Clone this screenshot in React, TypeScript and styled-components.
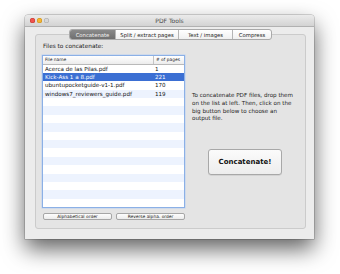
import React from "react";
import styled, { createGlobalStyle } from "styled-components";

const Global = createGlobalStyle`
  html, body { margin: 0; padding: 0; background: #ffffff; }
  body { font-family: "DejaVu Sans", "Liberation Sans", sans-serif; }
`;

const Page = styled.div`
  width: 340px;
  height: 274px;
  padding: 15px 0 0 25px;
  box-sizing: border-box;
  overflow: hidden;
`;

const Window = styled.div`
  width: 289px;
  height: 224px;
  background: #ececec;
  border-radius: 3px 3px 0 0;
  box-shadow: 0 10px 22px rgba(0, 0, 0, 0.62), 0 0 0 0.5px rgba(0, 0, 0, 0.3);
  display: flex;
  flex-direction: column;
  overflow: hidden;
`;

const TitleBar = styled.div`
  height: 12px;
  flex: none;
  background: linear-gradient(#ebebeb, #d3d3d3);
  border-bottom: 1px solid #b1b1b1;
  display: flex;
  align-items: center;
  position: relative;
  padding-left: 5px;
  box-sizing: border-box;
`;

const Lights = styled.div`
  display: flex;
  gap: 2px;
`;

const Light = styled.span<{ $c: string; $b: string }>`
  width: 5px;
  height: 5px;
  border-radius: 50%;
  background: ${(p) => p.$c};
  box-shadow: inset 0 0 0 0.5px ${(p) => p.$b};
`;

const Title = styled.div`
  position: absolute;
  left: 0;
  right: 0;
  text-align: center;
  font-size: 6px;
  color: #4a4a4a;
  line-height: 12px;
`;

const Body = styled.div`
  flex: 1;
  display: flex;
  flex-direction: column;
  padding: 2px 8px 10px 10px;
`;

const TabsRow = styled.div`
  display: flex;
  justify-content: center;
  position: relative;
  z-index: 1;
`;

const Tabs = styled.div`
  display: flex;
  height: 11px;
  border-radius: 3px;
  border: 1px solid #a9a9a9;
  box-sizing: border-box;
  background: linear-gradient(#ffffff, #f0f0f0);
  overflow: hidden;
`;

const Tab = styled.div<{ $active?: boolean; $w: number }>`
  width: ${(p) => p.$w}px;
  display: flex;
  align-items: center;
  justify-content: center;
  font-size: 5.3px;
  color: ${(p) => (p.$active ? "#f2f2f2" : "#1a1a1a")};
  background: ${(p) => (p.$active ? "linear-gradient(#8a8a8a, #6f6f6f)" : "transparent")};
  border-left: ${(p) => (p.$active ? "none" : "1px solid #b5b5b5")};
  box-sizing: border-box;
  &:first-child { border-left: none; }
`;

const Panel = styled.div`
  flex: 1;
  margin-top: -6px;
  border: 1px solid #cbcbcb;
  border-radius: 3px;
  background: #e4e4e4;
  display: flex;
  padding: 8px 6px 8px 6px;
  gap: 6px;
`;

const LeftCol = styled.div`
  width: 143px;
  display: flex;
  flex-direction: column;
`;

const Label = styled.div`
  font-size: 5.8px;
  color: #1c1c1c;
  padding-left: 1px;
  height: 12px;
  line-height: 7px;
`;

const List = styled.div`
  height: 153px;
  border: 1px solid #8bb0e6;
  box-shadow: 0 0 0 0.5px #b9d0f2;
  background: #ffffff;
  box-sizing: border-box;
  display: flex;
  flex-direction: column;
  overflow: hidden;
`;

const HeaderRow = styled.div`
  height: 7.5px;
  flex: none;
  display: flex;
  background: linear-gradient(#ffffff, #ececec);
  border-bottom: 1px solid #b9b9b9;
  box-sizing: content-box;
  font-size: 4.4px;
  color: #222;
`;

const HeadCell = styled.div<{ $w?: number }>`
  ${(p) => (p.$w ? `width: ${p.$w}px;` : "flex: 1;")}
  padding-left: 2px;
  line-height: 7.5px;
  box-sizing: border-box;
  & + & { border-left: 1px solid #c4c4c4; }
`;

const Row = styled.div<{ $sel?: boolean; $alt?: boolean }>`
  height: 8.4px;
  flex: none;
  display: flex;
  font-size: 5.6px;
  line-height: 8.4px;
  color: ${(p) => (p.$sel ? "#ffffff" : "#111")};
  background: ${(p) => (p.$sel ? "#3b6fd3" : p.$alt ? "#edf3fe" : "#ffffff")};
`;

const Cell = styled.div<{ $w?: number }>`
  ${(p) => (p.$w ? `width: ${p.$w}px;` : "flex: 1;")}
  padding-left: 2px;
  box-sizing: border-box;
  white-space: nowrap;
  overflow: hidden;
`;

const ButtonRow = styled.div`
  display: flex;
  gap: 4px;
  margin-top: 5px;
  padding-left: 1px;
`;

const SmallButton = styled.div`
  width: 69px;
  height: 7px;
  border: 1px solid #a6a6a6;
  border-radius: 2px;
  background: linear-gradient(#fdfdfd, #ececec);
  box-sizing: border-box;
  font-size: 4.4px;
  line-height: 5px;
  text-align: center;
  color: #222;
`;

const RightCol = styled.div`
  flex: 1;
  display: flex;
  flex-direction: column;
  align-items: center;
  padding-top: 49px;
`;

const Help = styled.div`
  width: 106px;
  font-size: 5.6px;
  line-height: 7.8px;
  color: #1c1c1c;
  padding-right: 3px;
  box-sizing: border-box;
`;

const BigButton = styled.div`
  margin-top: 26px;
  width: 74px;
  height: 26px;
  border: 1px solid #a8a8a8;
  border-radius: 3px;
  background: linear-gradient(#fbfbfb, #ededed);
  box-sizing: border-box;
  display: flex;
  align-items: center;
  justify-content: center;
  font-size: 7px;
  font-weight: bold;
  color: #111;
  box-shadow: 0 0.5px 0.5px rgba(0,0,0,0.15);
`;

const files = [
  { name: "Acerca de las Pilas.pdf", pages: "1" },
  { name: "Kick-Ass 1 a 8.pdf", pages: "221" },
  { name: "ubuntupocketguide-v1-1.pdf", pages: "170" },
  { name: "windows7_reviewers_guide.pdf", pages: "119" },
];

export default function App() {
  const rows = Array.from({ length: 17 }, (_, i) => files[i]);
  return (
    <Page>
      <Global />
      <Window>
        <TitleBar>
          <Lights>
            <Light $c="#f0534d" $b="#c33a34" />
            <Light $c="#f5b631" $b="#c98f1e" />
            <Light $c="#d6d6d6" $b="#aaaaaa" />
          </Lights>
          <Title>PDF Tools</Title>
        </TitleBar>
        <Body>
          <TabsRow>
            <Tabs>
              <Tab $active $w={45}>Concatenate</Tab>
              <Tab $w={63}>Split / extract pages</Tab>
              <Tab $w={54}>Text / images</Tab>
              <Tab $w={39}>Compress</Tab>
            </Tabs>
          </TabsRow>
          <Panel>
            <LeftCol>
              <Label>Files to concatenate:</Label>
              <List>
                <HeaderRow>
                  <HeadCell $w={110}>File name</HeadCell>
                  <HeadCell># of pages</HeadCell>
                </HeaderRow>
                {rows.map((f, i) => (
                  <Row key={i} $sel={i === 1} $alt={i % 2 === 1}>
                    <Cell $w={110}>{f ? f.name : ""}</Cell>
                    <Cell>{f ? f.pages : ""}</Cell>
                  </Row>
                ))}
              </List>
              <ButtonRow>
                <SmallButton>Alphabetical order</SmallButton>
                <SmallButton>Reverse alpha. order</SmallButton>
              </ButtonRow>
            </LeftCol>
            <RightCol>
              <Help>
                To concatenate PDF files, drop them on the list at left. Then, click on the big button below to choose an output file.
              </Help>
              <BigButton>Concatenate!</BigButton>
            </RightCol>
          </Panel>
        </Body>
      </Window>
    </Page>
  );
}
